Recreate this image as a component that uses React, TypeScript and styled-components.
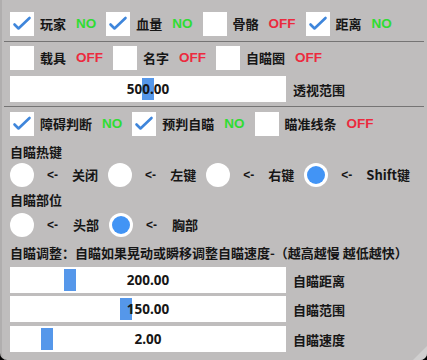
import React from "react";
import styled, { createGlobalStyle } from "styled-components";

const Global = createGlobalStyle`
  html, body { margin: 0; padding: 0; background: #000; }
  body { width: 427px; height: 360px; overflow: hidden; }
  * { box-sizing: border-box; }
`;

const Window = styled.div`
  position: relative;
  width: 427px;
  height: 360px;
  background: #bfbdbd;
  border-left: 2px solid #b0aeae;
  border-radius: 0 0 7px 7px;
  padding: 0 7px 0 8px;
  font-family: "Noto Sans CJK SC", "Noto Sans", sans-serif;
  font-weight: 700;
  font-size: 13px;
  color: #161616;
  overflow: hidden;
`;

const Row = styled.div<{ $mt: number }>`
  display: flex;
  align-items: center;
  height: 24px;
  margin-top: ${(p) => p.$mt}px;
  line-height: 16px;
  white-space: nowrap;
`;

const Separator = styled.div<{ $mt: number }>`
  height: 1px;
  background: #757474;
  margin: ${(p) => p.$mt}px -4px 0 -6px;
`;

const Box = styled.div`
  width: 24px;
  height: 24px;
  background: #fff;
  flex: none;
  display: flex;
  align-items: center;
  justify-content: center;
`;

const Label = styled.span`
  margin-left: 6px;
`;

const Status = styled.span<{ $on: boolean }>`
  margin-left: 10px;
  margin-right: 10px;
  font-family: "Liberation Sans", "Noto Sans", sans-serif;
  font-weight: 700;
  font-size: 13.5px;
  color: ${(p) => (p.$on ? "#2fdc33" : "#ec2a3e")};
`;

const Heading = styled.div<{ $mt: number }>`
  margin-top: ${(p) => p.$mt}px;
  height: 16px;
  line-height: 16px;
  white-space: nowrap;
`;

const Radio = styled.div<{ $on: boolean }>`
  width: 24px;
  height: 24px;
  border-radius: 50%;
  background: #fff;
  flex: none;
  display: flex;
  align-items: center;
  justify-content: center;
  &::after {
    content: "";
    width: 18px;
    height: 18px;
    border-radius: 50%;
    background: ${(p) => (p.$on ? "#4294f5" : "transparent")};
  }
`;

const Arrow = styled.span`
  margin-left: 13px;
  width: 13px;
  font-family: "Liberation Sans", sans-serif;
  font-size: 12px;
`;

const RadioLabel = styled.span`
  margin-left: 13px;
  margin-right: 10px;
`;

const SliderRow = styled.div<{ $mt: number }>`
  display: flex;
  align-items: center;
  height: 26px;
  margin-top: ${(p) => p.$mt}px;
`;

const Track = styled.div`
  position: relative;
  width: 276px;
  height: 26px;
  background: #fff;
  flex: none;
`;

const Grab = styled.div`
  position: absolute;
  top: 2px;
  bottom: 2px;
  width: 12px;
  background: #5597ea;
`;

const Value = styled.div`
  position: absolute;
  inset: 0;
  display: flex;
  align-items: center;
  justify-content: center;
  font-family: "Noto Sans", sans-serif;
  font-weight: 700;
  font-size: 13.5px;
  color: #161616;
`;

const SliderLabel = styled.span`
  margin-left: 7px;
  white-space: nowrap;
`;

const Grip = styled.div`
  position: absolute;
  right: 0;
  bottom: 0;
  width: 0;
  height: 0;
  border-style: solid;
  border-width: 0 0 14px 14px;
  border-color: transparent transparent #d0cfcf transparent;
`;

const Check = () => (
  <svg width="24" height="24" viewBox="0 0 24 24">
    <polyline
      points="4.5,12.5 8.5,16.5 19.5,6"
      fill="none"
      stroke="#3f86db"
      strokeWidth="2.6"
      strokeLinecap="round"
      strokeLinejoin="round"
    />
  </svg>
);

type CB = { label: string; checked: boolean };

const CheckRow = ({ items, mt }: { items: CB[]; mt: number }) => (
  <Row $mt={mt}>
    {items.map((it) => (
      <React.Fragment key={it.label}>
        <Box>{it.checked && <Check />}</Box>
        <Label>{it.label}</Label>
        <Status $on={it.checked}>{it.checked ? "NO" : "OFF"}</Status>
      </React.Fragment>
    ))}
  </Row>
);

const RadioRow = ({ items, sel, mt }: { items: string[]; sel: number; mt: number }) => (
  <Row $mt={mt}>
    {items.map((l, i) => (
      <React.Fragment key={l}>
        <Radio $on={i === sel} />
        <Arrow>{"<-"}</Arrow>
        <RadioLabel>{l}</RadioLabel>
      </React.Fragment>
    ))}
  </Row>
);

const Slider = ({ value, min, max, label, mt }: { value: number; min: number; max: number; label: string; mt: number }) => {
  const f = (value - min) / (max - min);
  const left = 2 + f * (276 - 4 - 12);
  return (
    <SliderRow $mt={mt}>
      <Track>
        <Grab style={{ left: `${left}px` }} />
        <Value>{value.toFixed(2)}</Value>
      </Track>
      <SliderLabel>{label}</SliderLabel>
    </SliderRow>
  );
};

export default function App() {
  return (
    <>
      <Global />
      <Window>
        <CheckRow
          mt={12}
          items={[
            { label: "玩家", checked: true },
            { label: "血量", checked: true },
            { label: "骨骼", checked: false },
            { label: "距离", checked: true },
          ]}
        />
        <Separator $mt={5} />
        <CheckRow
          mt={4}
          items={[
            { label: "载具", checked: false },
            { label: "名字", checked: false },
            { label: "自瞄圈", checked: false },
          ]}
        />
        <Slider mt={6} value={500} min={0} max={1000} label="透视范围" />
        <Separator $mt={4} />
        <CheckRow
          mt={5}
          items={[
            { label: "障碍判断", checked: true },
            { label: "预判自瞄", checked: true },
            { label: "瞄准线条", checked: false },
          ]}
        />
        <Heading $mt={8}>自瞄热键</Heading>
        <RadioRow mt={3} items={["关闭", "左键", "右键", "Shift键"]} sel={3} />
        <Heading $mt={5}>自瞄部位</Heading>
        <RadioRow mt={5} items={["头部", "胸部"]} sel={1} />
        <Heading $mt={8}>自瞄调整：自瞄如果晃动或瞬移调整自瞄速度-（越高越慢 越低越快）</Heading>
        <Slider mt={6} value={200} min={0} max={1000} label="自瞄距离" />
        <Slider mt={3} value={150} min={0} max={360} label="自瞄范围" />
        <Slider mt={4} value={2} min={1} max={10} label="自瞄速度" />
        <Grip />
      </Window>
    </>
  );
}
